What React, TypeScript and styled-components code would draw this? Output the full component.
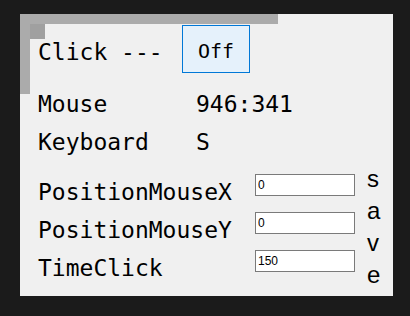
import React from "react";
import styled, { createGlobalStyle } from "styled-components";

const GlobalStyle = createGlobalStyle`
    html, body {
        margin: 0;
        padding: 0;
        background: #1b1b1b;
    }
`;

const mono = `"DejaVu Sans Mono", "Liberation Mono", monospace`;
const sans = `"Liberation Sans", Arial, sans-serif`;

const Panel = styled.div`
    box-sizing: border-box;
    width: 373px;
    height: 282px;
    margin: 14px 17px 20px 20px;
    padding: 11px 0 0 18px;
    color: #000;
    font-family: ${mono};
    font-size: 23px;
    background:
        linear-gradient(#a0a0a0, #a0a0a0) 10px 10px / 15px 15px no-repeat,
        linear-gradient(#ababab, #ababab) 0 0 / 258px 10px no-repeat,
        linear-gradient(#ababab, #ababab) 0 0 / 10px 80px no-repeat,
        #f0f0f0;
`;

const ClickRow = styled.div`
    display: flex;
    align-items: center;
    height: 48px;
`;

const ClickLabel = styled.span`
    width: 144px;
    margin-top: 6px;
    white-space: pre;
`;

const ToggleButton = styled.button`
    box-sizing: border-box;
    width: 68px;
    height: 48px;
    padding: 4px 0 0;
    border: 1px solid #0078d7;
    background: #e5f1fb;
    color: #000;
    font-family: ${mono};
    font-size: 20px;
    display: flex;
    align-items: center;
    justify-content: center;
`;

const InfoGrid = styled.div`
    display: grid;
    grid-template-columns: 158px auto;
    grid-auto-rows: 38px;
    line-height: 38px;
    margin-top: 12px;
`;

const FormSection = styled.div`
    display: flex;
    align-items: flex-start;
    margin-top: 12px;
`;

const FieldGrid = styled.div`
    display: grid;
    grid-template-columns: 217px 100px;
    grid-auto-rows: 38px;
    align-items: start;
`;

const FieldLabel = styled.span`
    line-height: 38px;
    white-space: nowrap;
`;

const Field = styled.input`
    box-sizing: border-box;
    width: 100px;
    height: 22px;
    margin-top: 1px;
    padding: 0 2px;
    border: 1px solid #7a7a7a;
    background: #fff;
    color: #000;
    font-family: ${sans};
    font-size: 12px;
    outline: none;
`;

const SaveColumn = styled.div`
    display: flex;
    flex-direction: column;
    margin: -10px 0 0 12px;
    font-family: ${sans};
    font-size: 24px;
    line-height: 32px;
`;

const fields = [
    { label: "PositionMouseX", value: "0" },
    { label: "PositionMouseY", value: "0" },
    { label: "TimeClick", value: "150" },
];

export default function App() {
    return (
        <React.Fragment>
            <GlobalStyle />
            <Panel>
                <ClickRow>
                    <ClickLabel>Click ---</ClickLabel>
                    <ToggleButton>Off</ToggleButton>
                </ClickRow>
                <InfoGrid>
                    <span>Mouse</span>
                    <span>946:341</span>
                    <span>Keyboard</span>
                    <span>S</span>
                </InfoGrid>
                <FormSection>
                    <FieldGrid>
                        {fields.map(({ label, value }) => (
                            <React.Fragment key={label}>
                                <FieldLabel>{label}</FieldLabel>
                                <Field defaultValue={value} />
                            </React.Fragment>
                        ))}
                    </FieldGrid>
                    <SaveColumn>
                        {"save".split("").map((ch, i) => (
                            <span key={i}>{ch}</span>
                        ))}
                    </SaveColumn>
                </FormSection>
            </Panel>
        </React.Fragment>
    );
}
